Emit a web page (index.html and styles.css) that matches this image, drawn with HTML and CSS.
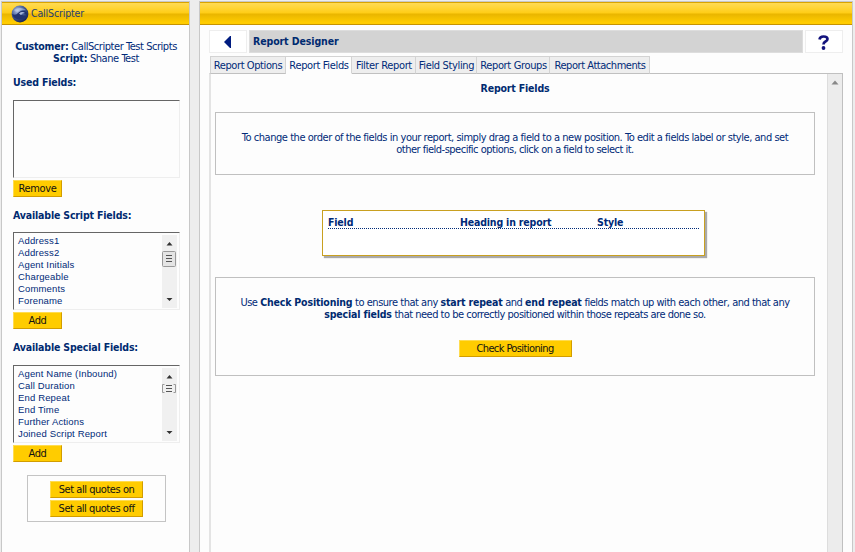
FILE: index.html
```html
<!DOCTYPE html>
<html lang="en">
<head>
<meta charset="utf-8">
<title>Report Designer</title>
<link rel="stylesheet" href="styles.css">
</head>
<body>
<aside class="side">
  <header class="bar">
    <svg class="logo" width="18" height="18" viewBox="0 0 18 18">
      <defs><radialGradient id="globe" cx=".35" cy=".3" r=".8"><stop offset="0" stop-color="#b5c5e5"/><stop offset=".4" stop-color="#536da6"/><stop offset="1" stop-color="#0b1748"/></radialGradient></defs>
      <circle cx="9" cy="9" r="8.4" fill="url(#globe)"/>
      <path d="M3 5Q9 1 15 5Q11 4 8 6Q5 8 3 5Z" fill="#c3d0ea" opacity=".6"/>
      <path d="M1 9Q5 11 7 8Q10 5 14 6Q17 8 16 10Q12 7 9 9Q12 11 16 11Q12 16 6 14Q2 13 1 9Z" fill="#22346f"/>
      <path d="M8 8.500Q11 6 14 8Q11 8 10 10Z" fill="#a9b9dc"/>
    </svg>
    <span class="brand">CallScripter</span>
  </header>
  <div class="side-body">
    <p class="info"><b>Customer:</b> <span class="cust">CallScripter Test Scripts</span><br><b>Script:</b> Shane Test</p>
    <h2 class="h-used">Used Fields:</h2>
    <div class="list roomy"></div>
    <button class="btn small">Remove</button>
    <h2>Available Script Fields:</h2>
    <div class="list">
      <ul><li>Address1</li><li>Address2</li><li>Agent Initials</li><li>Chargeable</li><li>Comments</li><li>Forename</li></ul>
      <svg class="scroll" width="15" height="73" viewBox="0 0 15 73">
        <rect width="15" height="73" fill="#f0f0f0"/>
        <path d="M4.500 10.500L7.500 7L10.500 10.500ZM4.500 63H10.500L7.500 66Z" fill="#333"/>
        <rect x=".5" y="16.500" width="13" height="15" rx="1" fill="#e4e4e4" stroke="#999"/>
        <path d="M4 20.500H10M4 23.500H10M4 26.500H10" stroke="#555"/>
      </svg>
    </div>
    <button class="btn small">Add</button>
    <h2>Available Special Fields:</h2>
    <div class="list roomy">
      <ul><li>Agent Name (Inbound)</li><li>Call Duration</li><li>End Repeat</li><li>End Time</li><li>Further Actions</li><li>Joined Script Report</li></ul>
      <svg class="scroll" width="15" height="73" viewBox="0 0 15 73">
        <rect width="15" height="73" fill="#f0f0f0"/>
        <path d="M4.500 10.500L7.500 7L10.500 10.500ZM4.500 63H10.500L7.500 66Z" fill="#333"/>
        <path d="M2.500 16.500H.500V24.500H2.500M11.500 16.500H13.500V24.500H11.500" fill="none" stroke="#999"/>
        <path d="M4 17.500H10M4 20.500H10M4 23.500H10" stroke="#555"/>
      </svg>
    </div>
    <button class="btn small">Add</button>
    <div class="quotes">
      <button class="btn">Set all quotes on</button>
      <button class="btn">Set all quotes off</button>
    </div>
  </div>
</aside>
<main class="main">
  <div class="bar"></div>
  <div class="titlebar">
    <div class="iconbox"><svg width="8" height="12" viewBox="0 0 8 12"><path d="M0 6L6 0H7V12H6Z" fill="#001c80"/></svg></div>
    <h1>Report Designer</h1>
    <div class="iconbox help"><svg width="12" height="15" viewBox="0 0 12 15"><path d="M1.500 4.500Q2 1.500 5.500 1.500Q9.500 1.500 9.500 4Q9.500 5.500 7.500 6.500Q5.500 7.500 5.500 9.500" fill="none" stroke="#14147d" stroke-width="2.700"/><circle cx="5.500" cy="13" r="1.900" fill="#14147d"/></svg></div>
  </div>
  <nav class="tabs">
    <a class="t1">Report Options</a><a class="t2 on">Report Fields</a><a class="t3">Filter Report</a><a class="t4">Field Styling</a><a class="t5">Report Groups</a><a class="t6">Report Attachments</a>
  </nav>
  <div class="pane">
    <div class="content">
      <h2>Report Fields</h2>
      <section class="box box1"><p><span class="l1">To change the order of the fields in your report, simply drag a field to a new position. To edit a fields label or style, and set</span><br><span class="l2">other field-specific options, click on a field to select it.</span></p></section>
      <section class="table"><div class="row"><span>Field</span><span>Heading in report</span><span>Style</span></div></section>
      <section class="box box2"><p><span class="l3">Use <b>Check Positioning</b> to ensure that any <b>start repeat</b> and <b>end repeat</b> fields match up with each other, and that any</span><br><span class="l4"><b>special fields</b> that need to be correctly positioned within those repeats are done so.</span></p>
        <button class="btn check">Check Positioning</button></section>
    </div>
    <div class="track"><svg width="14" height="16" viewBox="0 0 14 16"><path d="M3.500 10.500L7 6.500L10.500 10.500Z" fill="#888"/></svg></div>
  </div>
</main>
</body>
</html>
```
FILE: styles.css
```css
* { box-sizing: border-box; }
body { margin: 0; width: 855px; height: 552px; overflow: hidden; background: #ededed; display: flex; gap: 9px; padding: 1px 2px 0 1px; color: #002a78; font: 11px/12px "DejaVu Sans Condensed", "DejaVu Sans", sans-serif; font-stretch: condensed; letter-spacing: -.35px; white-space: nowrap; }
b, h1, h2 { font-size: 10.5px; font-weight: bold; letter-spacing: -.17px; color: #002a70; }
b { line-height: 1px; }
p, h1, h2, ul { margin: 0; padding: 0; }
.side, .main { background: #fdfdfd; border: 1px solid #c8c8c8; border-bottom: 0; height: 551px; }
.side { width: 189px; }
.main { width: 654px; }
.bar { height: 23px; background: linear-gradient(#ffdb55, #ffcd16 48%, #e9b500 52%, #fc0 92%); border-top: 1px solid #d9a400; border-bottom: 1px solid #c69300; display: flex; align-items: center; padding-left: 9px; gap: 2px; }
.brand { font-size: 10.5px; letter-spacing: -.15px; color: #293f70; margin-top: -1px; }
.side-body { padding: 16px 0 0 11px; }
.info { width: 166px; text-align: center; letter-spacing: -.45px; }
.side h2 { margin-top: 12px; height: 12px; }
.side .h-used { margin-top: 11px; }
.list { margin-top: 11px; width: 167px; height: 78px; border: 1px solid #eee; border-top-color: #666; border-left-color: #666; display: flex; justify-content: space-between; padding: 2px 2px 1px 4px; font: 9.5px/12px "Liberation Sans", sans-serif; letter-spacing: .15px; }
.roomy { margin-top: 12px; }
.list ul { list-style: none; }
.btn { display: block; height: 17px; padding: 0; background: #fc0; border: 1px solid #d29d00; border-top-color: #ffdc50; border-left-color: #ffdc50; color: #111; font: inherit; letter-spacing: inherit; line-height: 14px; text-align: center; }
.small { width: 49px; margin-top: 2px; }
.quotes { margin: 13px 0 0 14px; width: 139px; height: 47px; border: 1px solid #c4c4c4; padding-top: 5px; display: flex; flex-direction: column; align-items: center; gap: 2px; letter-spacing: -.45px; }
.quotes .btn { width: 93px; }
.titlebar { display: flex; gap: 2px; margin: 5px 9px 0 9px; height: 23px; }
.iconbox { width: 38px; border: 1px solid #eee; background: #fff; display: flex; justify-content: center; align-items: center; }
.help { padding-top: 2px; }
h1 { flex: 1; background: #d3d3d3; border: 1px solid #ddd; line-height: 21px; padding-left: 3px; letter-spacing: -.1px; }
.tabs { display: flex; margin: 3px 0 0 10px; height: 18px; position: relative; }
.tabs a { background: #eee; border: 1px solid #d3d3d3; border-left-width: 0; border-bottom-color: #c0c0c0; height: 18px; line-height: 18px; text-align: center; padding-left: 1px; }
.tabs .t1 { width: 76px; border-left-width: 1px; padding-left: 0; letter-spacing: -.4px; }
.tabs .t2 { width: 66px; }
.tabs .on { background: #fdfdfd; border-bottom-color: #fdfdfd; }
.t3 { width: 64px; } .t4 { width: 61px; } .t5 { width: 73px; }
.tabs .t6 { width: 100px; letter-spacing: -.45px; }
.pane { margin: -1px 9px 0; width: 634px; height: 480px; border: 1px solid #c0c0c0; border-left: 2px solid #e4e4e4; border-bottom: 0; display: flex; justify-content: space-between; }
.content { padding-left: 4px; width: 604px; }
.content h2 { text-align: center; margin-top: 8px; height: 12px; }
.box { border: 1px solid #c0c0c0; width: 600px; text-align: center; }
.box1 { height: 63px; margin-top: 18px; padding-top: 19px; }
.l1 { letter-spacing: -.46px; }
.l2, .l4 { letter-spacing: -.5px; }
.l3 { letter-spacing: -.48px; }
.table { width: 383px; height: 46px; margin: 35px 0 0 107px; border: 1px solid #c9a020; box-shadow: 2px 2px 1px #aaa; padding: 5px; background: #fff; }
.row { display: grid; grid-template-columns: 132px 137px 1fr; border-bottom: 1px dotted #002a78; font-weight: bold; font-size: 10.5px; letter-spacing: -.17px; height: 13px; line-height: 12px; }
.box2 { height: 99px; margin-top: 21px; padding-top: 19px; }
.check { width: 113px; margin: 19px auto 0; letter-spacing: -.6px; }
.track { width: 15px; background: #ececec; border-left: 1px solid #ddd; }
```
